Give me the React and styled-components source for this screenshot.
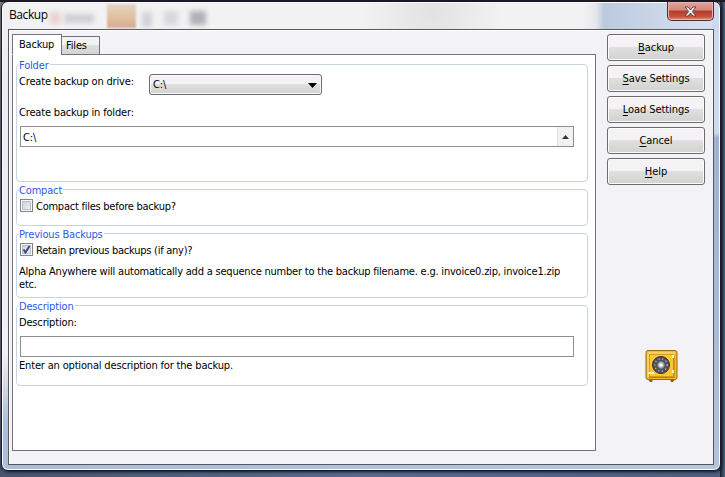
import React from "react";
import styled, { createGlobalStyle } from "styled-components";

const Global = createGlobalStyle`
  * { box-sizing: border-box; }
  body { margin: 0; overflow: hidden; font: 11px/14px "DejaVu Sans Condensed", "DejaVu Sans", sans-serif; font-stretch: condensed; letter-spacing: -0.17px; color: #000; }
  button { letter-spacing: inherit; color: #000; }
`;
const Desktop = styled.div`
  width: 725px; height: 477px; padding: 1px 4px 6px 1px;
  background:
    linear-gradient(#1c1a26, #1c1a26) 0 0 / 100% 2px no-repeat,
    linear-gradient(90deg, #16202c, #4c6788) 720px 0 / 5px 100% no-repeat,
    linear-gradient(90deg, #47546e, #596b91 50%, #4d5e82) 0 470px / 100% 7px no-repeat,
    linear-gradient(#777, #66606c 30%, #676371 80%, #334a6b);
`;
const Window = styled.main`
  width: 720px; height: 470px; border: 1px solid #1c1924; border-radius: 7px;
  box-shadow: inset 0 0 0 1px #f7fbff, 1px 1px 3px #111a28; padding: 0 6px 6px;
  background:
    linear-gradient(#f0eef1 0%, #eeeaf0 35%, #f2f0f4 75%, #aebed9 90%) 0 0 / 8px 100% no-repeat,
    linear-gradient(#cdd9ee 0 28%, #9eb2d4 29%, #b2c2df) 710px 0 / 10px 100% no-repeat,
    linear-gradient(90deg, #a9bddb, #b5c7e2) 0 462px / 100% 8px no-repeat,
    radial-gradient(ellipse at 430px 12px, #e2e2e3, transparent 70px),
    linear-gradient(90deg, #f2f2f3 0 580px, #e6e7ed 594px, #bdc9de 602px, #cdd8e9 665px, #d8e0ee);
`;
const TitleBar = styled.header`
  display: flex; align-items: flex-start; height: 27px; padding-left: 1px;
`;
const Title = styled.h1`
  margin: 4px 0 0; font: 400 12px/17px "Open Sans", "Noto Sans", sans-serif; width: 40px; letter-spacing: -0.4px;
`;
const Ghosts = styled.div`
  display: flex; align-items: flex-start; flex: 1; padding-top: 1px; margin-top: 1px;
`;
const Ghost = styled.span`
  width: ${p => p.$w}px; height: ${p => p.$h}px; margin: ${p => p.$top}px 0 0 ${p => p.$gap}px;
  background: ${p => p.$tone}; filter: blur(${p => p.$blur || 2.5}px);
`;
const Close = styled.button`
  width: 47px; height: 19px; padding: 0; display: flex; align-items: center; justify-content: center;
  border: 1px solid #502b31; border-top: 0; border-radius: 0 0 5px 5px;
  background: linear-gradient(#e3a49a 0, #d5877b 45%, #b83a2b 50%, #c4513d 80%, #e39172);
  box-shadow: inset 0 0 0 1px #edb3a8;
`;
const Client = styled.div`
  height: 436px; border: 1px solid #55575d; background: #f3f2f4; display: flex;
  box-shadow: inset 1px 1px #fff; padding: 4px 0 0 3px;
`;
const Pages = styled.div`width: 584px;`;
const Tabs = styled.nav`display: flex; align-items: flex-end; height: 21px; margin-bottom: -1px;`;
const Tab = styled.button`
  font: inherit; text-align: left; white-space: nowrap; border: 1px solid #717383; 
  width: ${p => p.$active ? 50 : 39}px; height: ${p => p.$active ? 21 : 19}px;
  margin-left: ${p => p.$active ? 0 : -1}px; padding: ${p => p.$active ? "1px 0 0 6px" : "1px 0 0 4px"};
  border-bottom-color: ${p => p.$active ? "#fff" : "#717383"};
  background: ${p => p.$active ? "#fff" : "linear-gradient(#f4f3f4 0 48%, #dedfde 50%, #d2d5d1)"};
`;
const Panel = styled.section`
  height: 397px; border: 1px solid #717383; background: #fff; padding: 9px 7px 0 3px;
  display: flex; flex-direction: column; gap: 7px;
`;
const Group = styled.section`
  height: ${p => p.$h}px; border: 1px solid #c8d5e1; border-radius: 4px; padding-left: 3px;
`;
const Legend = styled.h2`
  margin: -7px 0 0 -1px; width: max-content; height: 14px; padding-right: 1px; background: #fff;
  font-size: 11px; line-height: 16px; font-weight: 400; color: #3058e8;
`;
const Text = styled.div`
  height: 14px; line-height: 16px; white-space: nowrap; margin-top: ${p => p.$top || 0}px; margin-left: -1px;
`;
const Hint = styled(Text)`line-height: 14px;`;
const DriveRow = styled.div`display: flex; height: 30px; padding-top: 2px;`;
const DriveLabel = styled(Text)`width: 130px;`;
const Select = styled.button`
  width: 173px; height: 21px; border: 1px solid #6f6b72; border-radius: 3px; padding: 1px 4px 0 3px;
  font: inherit; display: flex; align-items: center; justify-content: space-between;
  background: linear-gradient(#f4f1f4 0 47%, #dfdfdf 50%, #d2d5d2); box-shadow: inset 0 0 0 1px #faf9fa;
`;
const Field = styled.div`
  width: 554px; height: 21px; line-height: 19px; border: 1px solid #8b8f8b; margin-top: ${p => p.$top}px; background: #fff;
  display: flex; align-items: center; justify-content: space-between; padding-left: 2px;
`;
const Value = styled.span`line-height: 18px; padding-top: 2px;`;
const Scroll = styled.span`
  width: 16px; height: 19px; background: #f0f1f0; border-left: 1px solid #dce5e5;
  display: flex; align-items: center; justify-content: center;
`;
const CheckLine = styled.label`display: flex; margin-top: ${p => p.$top}px; height: 14px; gap: 3px;`;
const Box = styled.span`
  width: 13px; height: 13px; border: 1px solid #81868b; box-shadow: inset 0 0 0 1px #f7f7f7, inset 0 0 0 2px #b8bfc6;
  background: linear-gradient(135deg, #c8ced3, #f5f5f5); display: flex;
`;
const CheckText = styled(Text)`margin-left: 0; letter-spacing: -0.25px;`;
const Paragraph = styled.p`
  margin: 8px 0 0 -1px; line-height: 13px; white-space: pre; letter-spacing: -0.207px;
`;
const Actions = styled.aside`
  width: 98px; margin-left: 11px; display: flex; flex-direction: column; gap: 4px;
`;
const Action = styled.button`
  height: 27px; border: 1px solid #6f6b72; border-radius: 3px; padding: 1px 0 0; font: inherit; white-space: nowrap;
  box-shadow: inset 0 0 0 1px #fcfbfc; letter-spacing: -0.08px;
  background: linear-gradient(#f4f2f4 0 47%, #dfdfdf 50%, #d0d3d0);
  u { text-underline-offset: 2px; text-decoration-thickness: 1px; }
`;
const Safe = styled.svg`display: block; width: 33px; height: 32px; margin: 161px 0 0 38px;`;

const actions = [["B", "ackup"], ["S", "ave Settings"], ["L", "oad Settings"], ["C", "ancel"], ["H", "elp"]];
const ghosts = [
  [10, 12, 8, 1, "#edd0d0"], [30, 9, 10, 4, "#cfcfd2"], [29, 24, 0, 13, "linear-gradient(#e5d5c4, #dfbf9d 60%, #d5aa98)", 1],
  [10, 15, 8, 6, "#d3d1db"], [14, 14, 7, 12, "#d8d8dc"], [16, 14, 7, 12, "#b0b0b8"],
];

export default function App() {
  return <><Global /><Desktop><Window>
    <TitleBar><Title>Backup</Title>
      <Ghosts>{ghosts.map(([w, h, top, gap, tone, blur], i) => <Ghost key={i} $w={w} $h={h} $top={top} $gap={gap} $tone={tone} $blur={blur} />)}</Ghosts>
      <Close aria-label="Close"><svg width="13" height="11" viewBox="0 0 13 11"><path d="M1 1h3l2.5 3L9 1h3L8.3 5.5 12 10H9L6.5 7 4 10H1l3.7-4.5z" fill="#fff" stroke="#55434b" strokeWidth="1" /></svg></Close>
    </TitleBar>
    <Client>
      <Pages>
        <Tabs><Tab $active>Backup</Tab><Tab>Files</Tab></Tabs>
        <Panel>
          <Group $h={118}><Legend>Folder</Legend>
            <DriveRow><DriveLabel>Create backup on drive:</DriveLabel><Select>C:\<svg width="9" height="5"><path d="M0 0h9L4.5 5z" /></svg></Select></DriveRow>
            <Text $top={3}>Create backup in folder:</Text>
            <Field $top={7}><Value>C:\</Value><Scroll><svg width="7" height="4"><path d="M0 4h7L3.5 0z" fill="#333" /></svg></Scroll></Field>
          </Group>
          <Group $h={37}><Legend>Compact</Legend><CheckLine $top={2}><Box /><CheckText>Compact files before backup?</CheckText></CheckLine></Group>
          <Group $h={65}><Legend>Previous Backups</Legend><CheckLine $top={2}><Box><svg width="11" height="11"><path d="M2.5 5.5l2 3L8.5 2" fill="none" stroke="#344a88" strokeWidth="2" /></svg></Box><CheckText>Retain previous backups (if any)?</CheckText></CheckLine>
            <Paragraph>{"Alpha Anywhere will automatically add a sequence number to the backup filename. e.g. invoice0.zip, invoice1.zip\netc."}</Paragraph>
          </Group>
          <Group $h={81}><Legend>Description</Legend><Text $top={2}>Description:</Text><Field $top={7} /><Hint $top={2}>Enter an optional description for the backup.</Hint></Group>
        </Panel>
      </Pages>
      <Actions>{actions.map(([key, rest]) => <Action key={key}><u>{key}</u>{rest}</Action>)}
        <Safe viewBox="0 0 33 32">
          <path d="M3 29h5l-1 3H5zM25 29h5l-2 3h-2z" fill="#8a5a10" />
          <rect x="1" y=".5" width="31" height="29" rx="2" fill="#f2b92c" stroke="#9b6a14" />
          <path d="M3 27V3h27" fill="none" stroke="#ffe78a" />
          <rect x="4.5" y="4.5" width="24" height="22" fill="#fdc733" stroke="#d99b1e" />
          <path d="M29 6v21.5H4" fill="none" stroke="#b77c15" />
          <circle cx="16" cy="15" r="8.5" fill="#4e5155" stroke="#30343a" />
          <circle cx="16" cy="15" r="6.2" fill="none" stroke="#c6c8c8" strokeWidth="1.2" strokeDasharray="1.2 2.5" />
          <circle cx="16" cy="15" r="3.4" fill="#bfc3c4" stroke="#777c80" /><circle cx="16" cy="15" r="1.5" fill="#fff" />
          <path d="M28 5v3M28 20v3M3 23h6" stroke="#fff3af" strokeWidth="2" />
        </Safe>
      </Actions>
    </Client>
  </Window></Desktop></>;
}
